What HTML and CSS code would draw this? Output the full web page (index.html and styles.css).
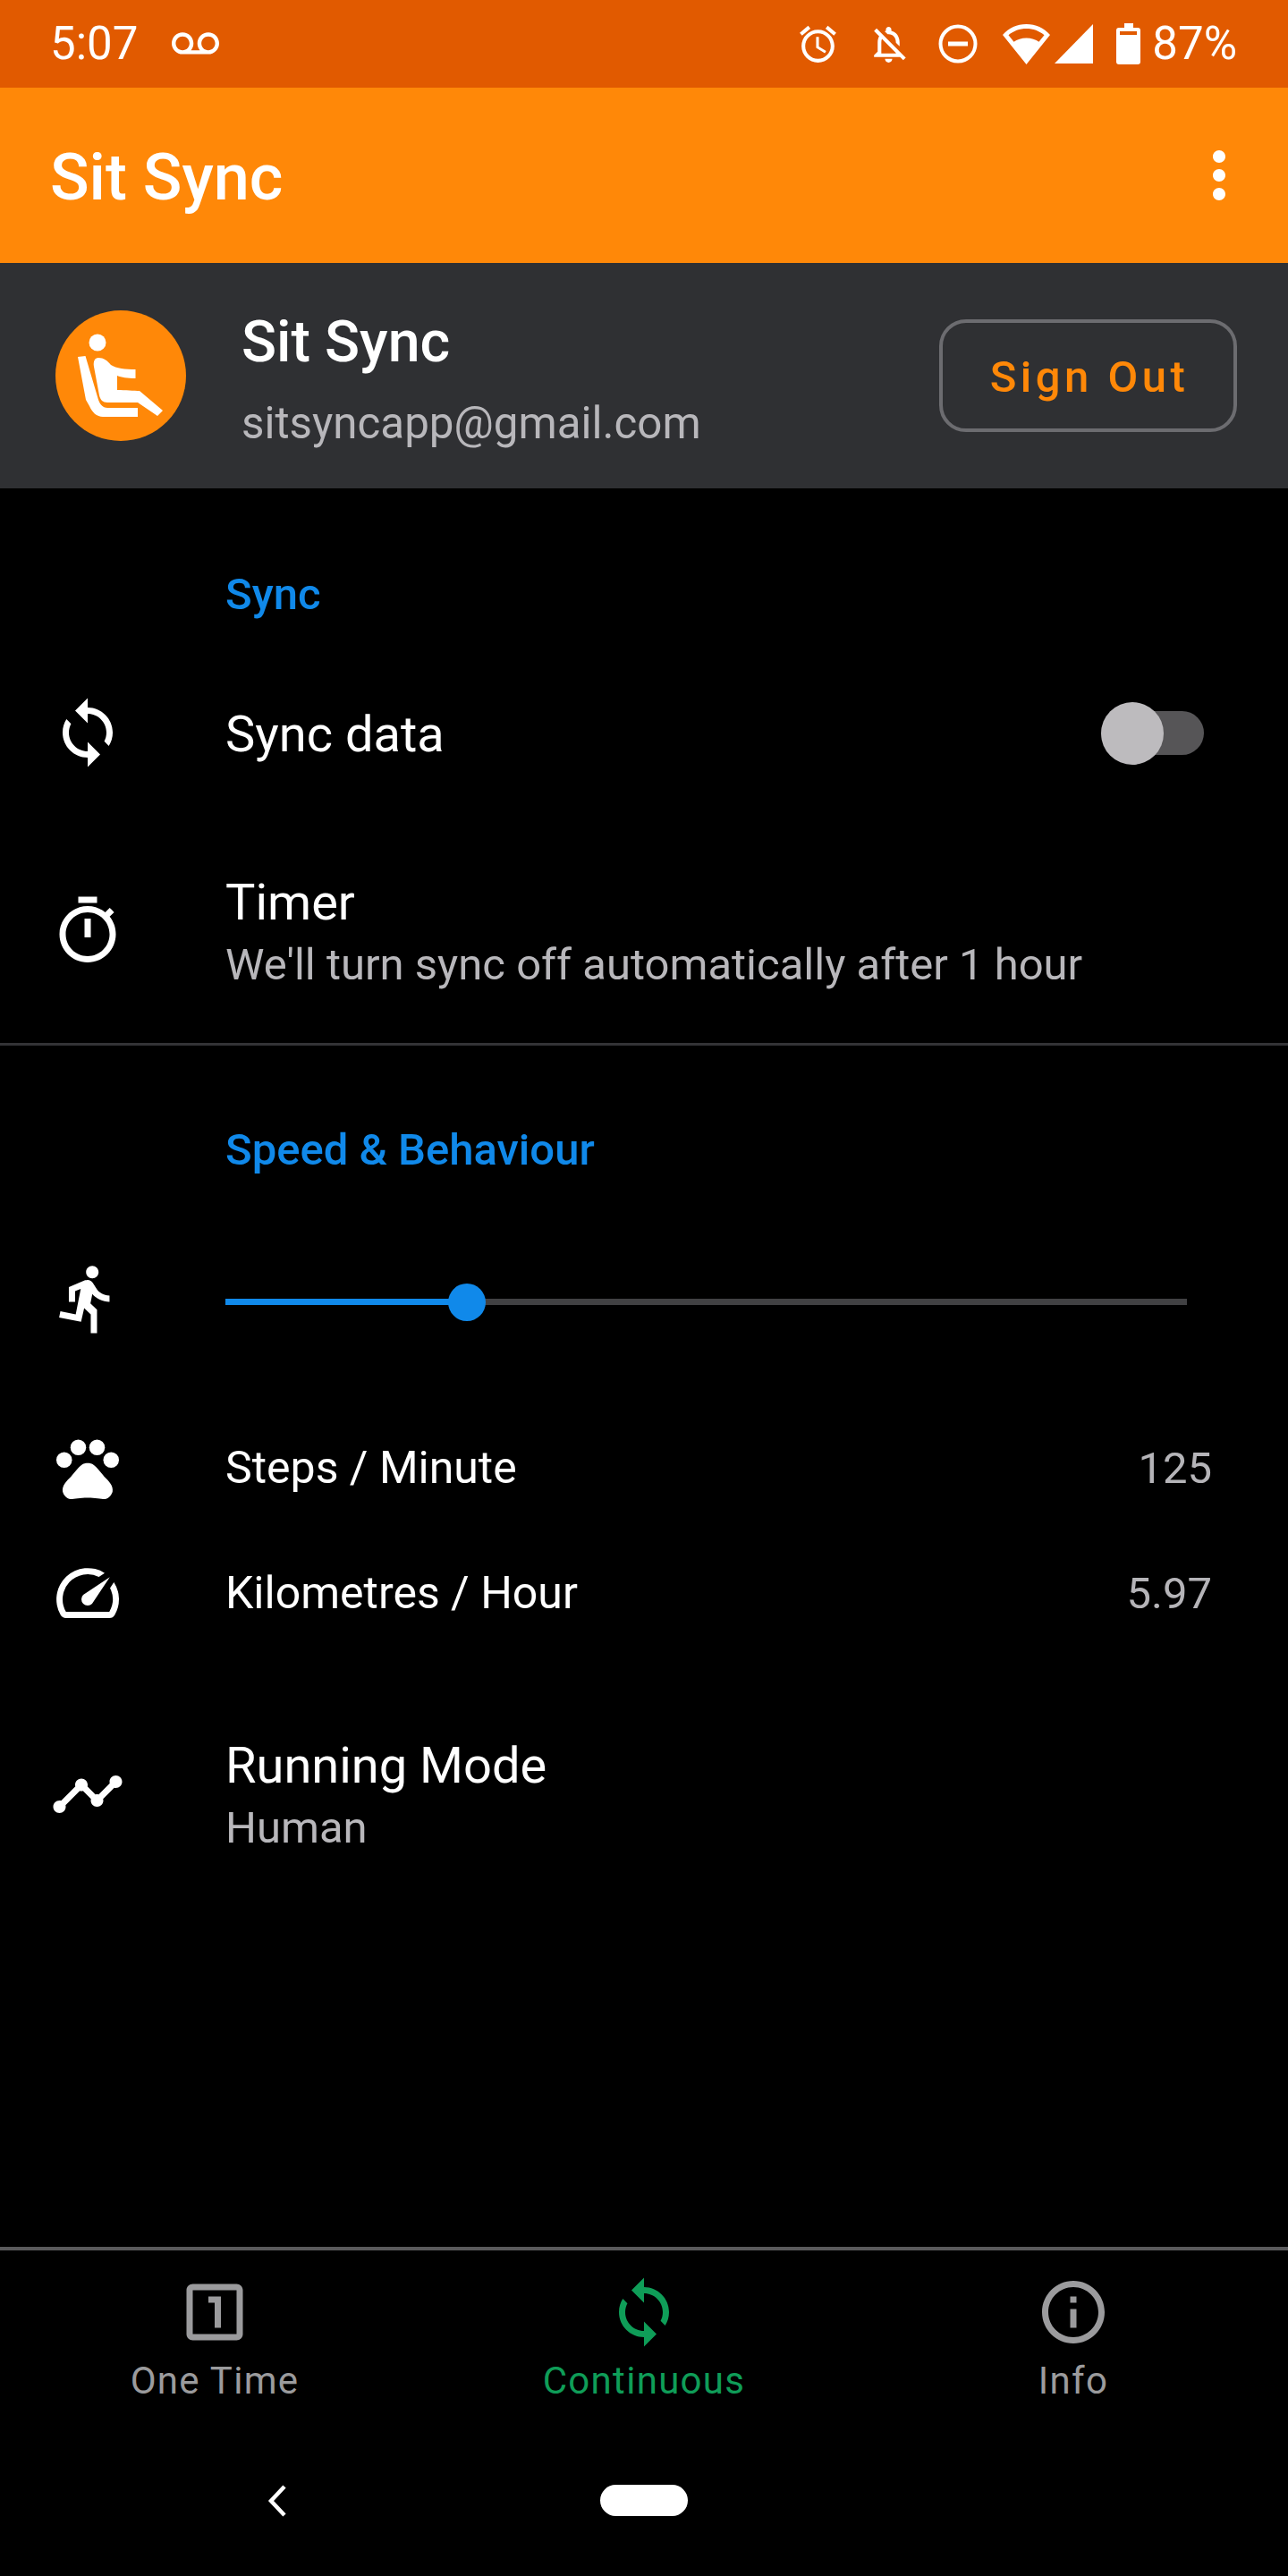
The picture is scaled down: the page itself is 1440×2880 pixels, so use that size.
FILE: index.html
```html
<!DOCTYPE html>
<html lang="en">
<head>
  <meta charset="UTF-8">
  <meta name="viewport" content="width=device-width, initial-scale=1.0">
  <title>Sit Sync</title>
  <link rel="stylesheet" href="styles.css">
</head>
<body>
  <div class="page">
    <div class="status-bar">
      <div class="status-left">
        <span class="status-text">5:07</span>
        <svg class="voicemail" viewBox="0 0 24 24"><path d="M18.5 6C15.46 6 13 8.46 13 11.5c0 1.33.47 2.55 1.26 3.5H9.74c.79-.95 1.26-2.17 1.26-3.5C11 8.46 8.54 6 5.5 6S0 8.46 0 11.5 2.46 17 5.5 17h13c3.04 0 5.5-2.46 5.5-5.5S21.54 6 18.5 6zm-13 9C3.57 15 2 13.43 2 11.5S3.57 8 5.5 8 9 9.57 9 11.5 7.43 15 5.5 15zm13 0c-1.93 0-3.5-1.57-3.5-3.5S16.57 8 18.5 8 22 9.57 22 11.5 20.43 15 18.5 15z"/></svg>
      </div>
      <div class="status-right">
        <svg class="status-icon alarm" viewBox="0 0 24 24"><path d="M22 5.72l-4.6-3.86-1.29 1.53 4.6 3.86L22 5.72zM7.88 3.39L6.6 1.86 2 5.71l1.29 1.53 4.59-3.85zM12.5 8H11v6l4.75 2.85.75-1.23-4-2.37V8zM12 4c-4.97 0-9 4.03-9 9s4.03 9 9 9 9-4.03 9-9-4.03-9-9-9zm0 16c-3.87 0-7-3.13-7-7s3.13-7 7-7 7 3.13 7 7-3.13 7-7 7z"/></svg>
        <svg class="status-icon bell" viewBox="0 0 24 24"><path d="M12 22c1.1 0 2-.9 2-2h-4c0 1.1.9 2 2 2zm0-15.5c2.49 0 4 2.02 4 4.5v.1l2 2V11c0-3.07-1.63-5.64-4.5-6.32V4c0-.83-.67-1.5-1.5-1.5s-1.5.67-1.5 1.5v.68c-.24.06-.47.15-.69.23l1.64 1.64c.18-.02.36-.05.55-.05zM5.41 3.35L4 4.76l2.81 2.81C6.29 8.57 6 9.74 6 11v5l-2 2v1h14.24l1.74 1.74 1.41-1.41L5.41 3.35zM16 17H8v-6c0-.68.12-1.32.34-1.9L16 16.76V17z"/></svg>
        <svg class="status-icon dnd" viewBox="0 0 44 44"><circle cx="22" cy="22" r="19.5" fill="none" stroke="#fff" stroke-width="4"/><rect x="11" y="19.5" width="22" height="5"/></svg>
        <svg class="wifi" viewBox="0 0 53 45"><path fill-rule="evenodd" d="M0 12C7 4 16 0 26.500 0S46 4 53 12L26.500 45zM6.500 12.300 12.500 19.800C16 17.200 21 15.500 26.500 15.500S37 17.200 40.500 19.800L46.500 12.300C41 7.500 34 5 26.500 5S12 7.500 6.500 12.300z"/></svg>
        <svg class="signal" viewBox="0 0 43 44"><path d="M43 0V44H0z"/></svg>
        <div class="battery"><span class="battery-gap"></span></div>
        <span class="status-text percent">87%</span>
      </div>
    </div>

    <div class="app-bar">
      <span class="app-title">Sit Sync</span>
      <svg class="more" viewBox="0 0 24 24"><path d="M12 8c1.1 0 2-.9 2-2s-.9-2-2-2-2 .9-2 2 .9 2 2 2zm0 2c-1.1 0-2 .9-2 2s.9 2 2 2 2-.9 2-2-.9-2-2-2zm0 6c-1.1 0-2 .9-2 2s.9 2 2 2 2-.9 2-2-.9-2-2-2z"/></svg>
    </div>

    <div class="account">
      <div class="avatar">
        <svg viewBox="0 0 146 146">
          <circle cx="47" cy="36" r="9.500"/>
          <path d="M25 52 33.500 51 48 100C50 106 54 109 58 109H92V119H53C46 119 41 114 38 107L34 100z"/>
          <path d="M48 53C54 53 58 56 62 61 68 65 78 66 89.500 66V76C80 76 74 75 69 73V89C78 89 88 90 94 90L120 112 114 118 92 103H58C53 103 50 100 49 95L43 63C42 57 44 53 48 53z"/>
        </svg>
      </div>
      <div class="account-text">
        <div class="account-name">Sit Sync</div>
        <div class="account-email">sitsyncapp@gmail.com</div>
      </div>
      <button class="sign-out">Sign Out</button>
    </div>

    <div class="content">
      <div class="category first">Sync</div>
      <div class="row sync-row">
        <div class="row-icon"><svg viewBox="0 0 24 24"><path d="M12 4V1L8 5l4 4V6c3.31 0 6 2.69 6 6 0 1.01-.25 1.97-.7 2.8l1.46 1.46C19.54 15.03 20 13.57 20 12c0-4.42-3.58-8-8-8zm0 14c-3.31 0-6-2.69-6-6 0-1.01.25-1.97.7-2.8L5.24 7.74C4.46 8.97 4 10.43 4 12c0 4.42 3.58 8 8 8v3l4-4-4-4v3z"/></svg></div>
        <div class="row-title">Sync data</div>
        <div class="switch"><span class="switch-knob"></span></div>
      </div>
      <div class="row timer-row">
        <div class="row-icon"><svg viewBox="0 0 24 24"><path d="M15 1H9v2h6V1zm-4 13h2V8h-2v6zm8.030-6.610l1.420-1.420c-.43-.51-.9-.99-1.410-1.410l-1.420 1.420C16.070 4.740 14.120 4 12 4c-4.970 0-9 4.030-9 9s4.020 9 9 9 9-4.030 9-9c0-2.120-.74-4.070-1.970-5.610zM12 20c-3.870 0-7-3.130-7-7s3.130-7 7-7 7 3.130 7 7-3.130 7-7 7z"/></svg></div>
        <div>
          <div class="row-title">Timer</div>
          <div class="row-sub">We'll turn sync off automatically after 1 hour</div>
        </div>
      </div>
      <div class="divider"></div>

      <div class="category">Speed &amp; Behaviour</div>
      <div class="row slider-row">
        <div class="row-icon"><svg viewBox="0 0 24 24"><path d="M13.490 5.480c1.100 0 2-.9 2-2s-.9-2-2-2-2 .9-2 2 .9 2 2 2zm-3.600 13.900l1-4.400 2.100 2v6h2v-7.500l-2.100-2 .6-3c1.300 1.500 3.300 2.500 5.500 2.500v-2c-1.900 0-3.500-1-4.300-2.400l-1-1.600c-.4-.6-1-1-1.700-1-.3 0-.5.1-.8.1l-5.200 2.200v4.700h2v-3.400l1.800-.7-1.600 8.100-4.900-1-.4 2 7 1.400z"/></svg></div>
        <div class="slider">
          <div class="slider-fill"></div>
          <span class="slider-thumb"></span>
        </div>
      </div>
      <div class="row stat-row steps">
        <div class="row-icon"><svg viewBox="0 0 24 24"><circle cx="4.500" cy="9.500" r="2.500"/><circle cx="9" cy="5.500" r="2.500"/><circle cx="15" cy="5.500" r="2.500"/><circle cx="19.500" cy="9.500" r="2.500"/><path d="M17.340 14.860c-.87-1.020-1.600-1.890-2.480-2.910-.46-.54-1.050-1.080-1.750-1.320-.11-.04-.22-.07-.33-.09-.25-.04-.52-.04-.78-.04s-.53 0-.79.05c-.11.02-.22.05-.33.09-.7.24-1.280.78-1.750 1.320-.87 1.020-1.600 1.890-2.480 2.910-1.310 1.310-2.920 2.760-2.620 4.790.29 1.020 1.020 2.030 2.330 2.320.73.15 3.060-.44 5.540-.44h.18c2.480 0 4.810.58 5.540.44 1.310-.29 2.040-1.310 2.330-2.320.31-2.040-1.300-3.490-2.610-4.800z"/></svg></div>
        <div class="stat-label">Steps / Minute</div>
        <div class="stat-value">125</div>
      </div>
      <div class="row stat-row">
        <div class="row-icon"><svg viewBox="0 0 24 24"><path d="M20.380 8.570l-1.230 1.850a8 8 0 0 1-.22 7.580H5.070A8 8 0 0 1 15.580 6.850l1.850-1.230A10 10 0 0 0 3.350 19a2 2 0 0 0 1.720 1h13.850a2 2 0 0 0 1.740-1 10 10 0 0 0-.27-10.440z"/><path d="M10.590 15.410a2 2 0 0 0 2.830 0l5.660-8.490-8.490 5.660a2 2 0 0 0 0 2.830z"/></svg></div>
        <div class="stat-label">Kilometres / Hour</div>
        <div class="stat-value">5.97</div>
      </div>
      <div class="row mode-row">
        <div class="row-icon"><svg viewBox="0 0 24 24"><path d="M23 8c0 1.100-.9 2-2 2-.18 0-.35-.02-.51-.07l-3.560 3.550c.05.16.07.34.07.52 0 1.100-.9 2-2 2s-2-.9-2-2c0-.18.02-.36.07-.52l-2.550-2.550c-.16.05-.34.07-.52.07s-.36-.02-.52-.07l-4.550 4.560c.05.16.07.33.07.51 0 1.100-.9 2-2 2s-2-.9-2-2 .9-2 2-2c.18 0 .35.02.51.07l4.560-4.550C8.020 9.360 8 9.180 8 9c0-1.100.9-2 2-2s2 .9 2 2c0 .18-.02.36-.07.52l2.550 2.550c.16-.05.34-.07.52-.07s.36.02.52.07l3.550-3.560C19.020 8.350 19 8.180 19 8c0-1.100.9-2 2-2s2 .9 2 2z"/></svg></div>
        <div>
          <div class="row-title">Running Mode</div>
          <div class="row-sub">Human</div>
        </div>
      </div>
    </div>

    <div class="tabs">
      <div class="tab">
        <svg viewBox="0 0 24 24"><path d="M19 3H5c-1.100 0-2 .9-2 2v14c0 1.100.9 2 2 2h14c1.100 0 2-.9 2-2V5c0-1.100-.9-2-2-2zm0 16H5V5h14v14zm-5-2V7h-4v2h2v8h2z"/></svg>
        <span>One Time</span>
      </div>
      <div class="tab active">
        <svg viewBox="0 0 24 24"><path d="M12 4V1L8 5l4 4V6c3.310 0 6 2.690 6 6 0 1.010-.25 1.970-.7 2.800l1.460 1.460C19.540 15.030 20 13.570 20 12c0-4.420-3.580-8-8-8zm0 14c-3.310 0-6-2.690-6-6 0-1.010.25-1.970.7-2.800L5.240 7.740C4.460 8.970 4 10.430 4 12c0 4.420 3.580 8 8 8v3l4-4-4-4v3z"/></svg>
        <span>Continuous</span>
      </div>
      <div class="tab">
        <svg viewBox="0 0 24 24"><path d="M11 7h2v2h-2zm0 4h2v6h-2zm1-9C6.480 2 2 6.480 2 12s4.480 10 10 10 10-4.480 10-10S17.520 2 12 2zm0 18c-4.410 0-8-3.590-8-8s3.590-8 8-8 8 3.590 8 8-3.590 8-8 8z"/></svg>
        <span>Info</span>
      </div>
    </div>

    <div class="nav-bar">
      <svg class="nav-back" viewBox="0 0 22 36"><path d="M19 2 4 18 19 34" fill="none" stroke="#fff" stroke-width="4.500"/></svg>
      <span class="nav-home"></span>
    </div>
  </div>
</body>
</html>
```

FILE: styles.css
```css
html, body {
  margin: 0;
  background: #000;
  font-family: Roboto, "Liberation Sans", sans-serif;
  color: #fff;
}

svg {
  display: block;
  fill: #fff;
}

.page {
  display: flex;
  flex-direction: column;
  width: 1440px;
  height: 2880px;
  overflow: hidden;
}

/* status bar */
.status-bar {
  display: flex;
  justify-content: space-between;
  align-items: center;
  flex: none;
  height: 98px;
  padding: 0 57px 0 56px;
  background: #e15a00;
}

.status-left,
.status-right {
  display: flex;
  align-items: center;
}

.status-text {
  font-size: 51px;
  line-height: 98px;
}

.voicemail {
  width: 53px;
  height: 53px;
  margin-left: 38px;
}

.status-icon {
  width: 49px;
  height: 49px;
}

.alarm { margin-right: 30px; }
.bell { margin-right: 31px; }

.dnd {
  width: 44px;
  height: 44px;
  margin-right: 28px;
}

.wifi {
  width: 53px;
  height: 45px;
  margin-right: 5px;
}

.signal {
  width: 43px;
  height: 44px;
  margin-right: 26px;
}

.battery {
  position: relative;
  width: 27px;
  height: 41px;
  margin-top: 5px;
  margin-right: 13px;
  border-radius: 3px;
  background: #fff;
}

.battery::before {
  content: "";
  position: absolute;
  top: -5px;
  left: 9px;
  width: 10px;
  height: 5px;
  background: #fff;
}

.battery-gap {
  display: block;
  position: absolute;
  top: 4px;
  left: 4px;
  width: 19px;
  height: 4px;
  background: #e15a00;
}

/* app bar */
.app-bar {
  display: flex;
  justify-content: space-between;
  align-items: center;
  flex: none;
  height: 196px;
  padding: 0 35px 0 56px;
  background: #ff8808;
}

.app-title {
  margin-top: 5px;
  font-size: 72px;
  font-weight: 500;
}

.more {
  width: 84px;
  height: 84px;
}

/* signed in account */
.account {
  display: flex;
  align-items: center;
  flex: none;
  height: 252px;
  padding: 0 57px 0 62px;
  background: #2f3033;
}

.avatar {
  flex: none;
  width: 146px;
  height: 146px;
  border-radius: 50%;
  background: #ff8808;
}

.account-text {
  flex: 1;
  margin-left: 62px;
  padding-top: 7px;
}

.account-name {
  font-size: 64.500px;
  font-weight: 500;
  line-height: 74px;
}

.account-email {
  margin-top: 25px;
  color: #b8b7bb;
  font-size: 49.300px;
  line-height: 58px;
}

.sign-out {
  width: 333px;
  height: 126px;
  padding: 2px 0 0 3px;
  border: 4px solid #6c6c70;
  border-radius: 30px;
  background: transparent;
  color: #ff8808;
  font-family: inherit;
  font-size: 49px;
  font-weight: 500;
  letter-spacing: 4.500px;
}

/* preference list */
.content {
  flex: 1;
}

.category {
  padding-left: 252px;
  padding-top: 88px;
  color: #1089ea;
  font-size: 49px;
  font-weight: 500;
  line-height: 58px;
}

.category.first {
  padding-top: 90px;
}

.row {
  display: flex;
  align-items: center;
  padding-right: 85px;
}

.row-icon {
  display: flex;
  justify-content: center;
  flex: none;
  width: 196px;
  margin-right: 56px;
}

.row-icon svg {
  width: 84px;
  height: 84px;
}

.row-title {
  flex: 1;
  font-size: 56px;
  line-height: 70px;
}

.row-sub {
  color: #b8b7bb;
  font-size: 49px;
  line-height: 70px;
}

.sync-row {
  height: 170px;
  margin-top: 40px;
}

.sync-row .row-title {
  padding-top: 4px;
}

.timer-row {
  height: 262px;
  box-sizing: border-box;
  padding-top: 18px;
}

/* these glyphs sit a little above the text block next to them */
.timer-row .row-icon,
.slider-row .row-icon,
.mode-row .row-icon {
  margin-bottom: 7px;
}

.divider {
  height: 3px;
  background: #333336;
}

.switch {
  position: relative;
  width: 115px;
  height: 49px;
  margin-right: 9px;
  border-radius: 25px;
  background: #565557;
}

.switch-knob {
  position: absolute;
  top: -10px;
  left: 0;
  width: 70px;
  height: 70px;
  border-radius: 50%;
  background: #bdbbbe;
}

.slider-row {
  height: 170px;
  margin-top: 55px;
}

.slider {
  position: relative;
  flex: 1;
  height: 7px;
  margin-right: 28px;
  background: #414143;
}

.slider-fill {
  width: 270px;
  height: 100%;
  background: #1089ea;
}

.slider-thumb {
  position: absolute;
  top: -17px;
  left: 249px;
  width: 42px;
  height: 42px;
  border-radius: 50%;
  background: #1089ea;
}

.stat-row {
  height: 140px;
}

.steps {
  margin-top: 31px;
}

.stat-label {
  flex: 1;
  font-size: 50px;
}

.stat-value {
  color: #b5b4b8;
  font-size: 49px;
}

.mode-row {
  margin-top: 88px;
}

/* bottom tabs */
.tabs {
  display: grid;
  grid-template-columns: 1fr 1fr 1fr;
  flex: none;
  height: 218px;
  box-sizing: border-box;
  border-top: 4px solid #5a5a5c;
}

.tab {
  display: flex;
  flex-direction: column;
  align-items: center;
  padding-top: 27px;
  color: #9b9b9d;
  font-size: 42px;
  letter-spacing: 1.300px;
}

.tab svg {
  width: 84px;
  height: 84px;
  margin-bottom: 10px;
  fill: #9b9b9d;
}

.tab.active {
  color: #0f9d58;
}

.tab.active svg {
  fill: #0f9d58;
}

/* system navigation */
.nav-bar {
  position: relative;
  flex: none;
  height: 150px;
}

.nav-back {
  position: absolute;
  top: 48px;
  left: 299px;
  width: 22px;
  height: 36px;
}

.nav-home {
  position: absolute;
  top: 48px;
  left: 671px;
  width: 98px;
  height: 35px;
  border-radius: 18px;
  background: #fff;
}
```
